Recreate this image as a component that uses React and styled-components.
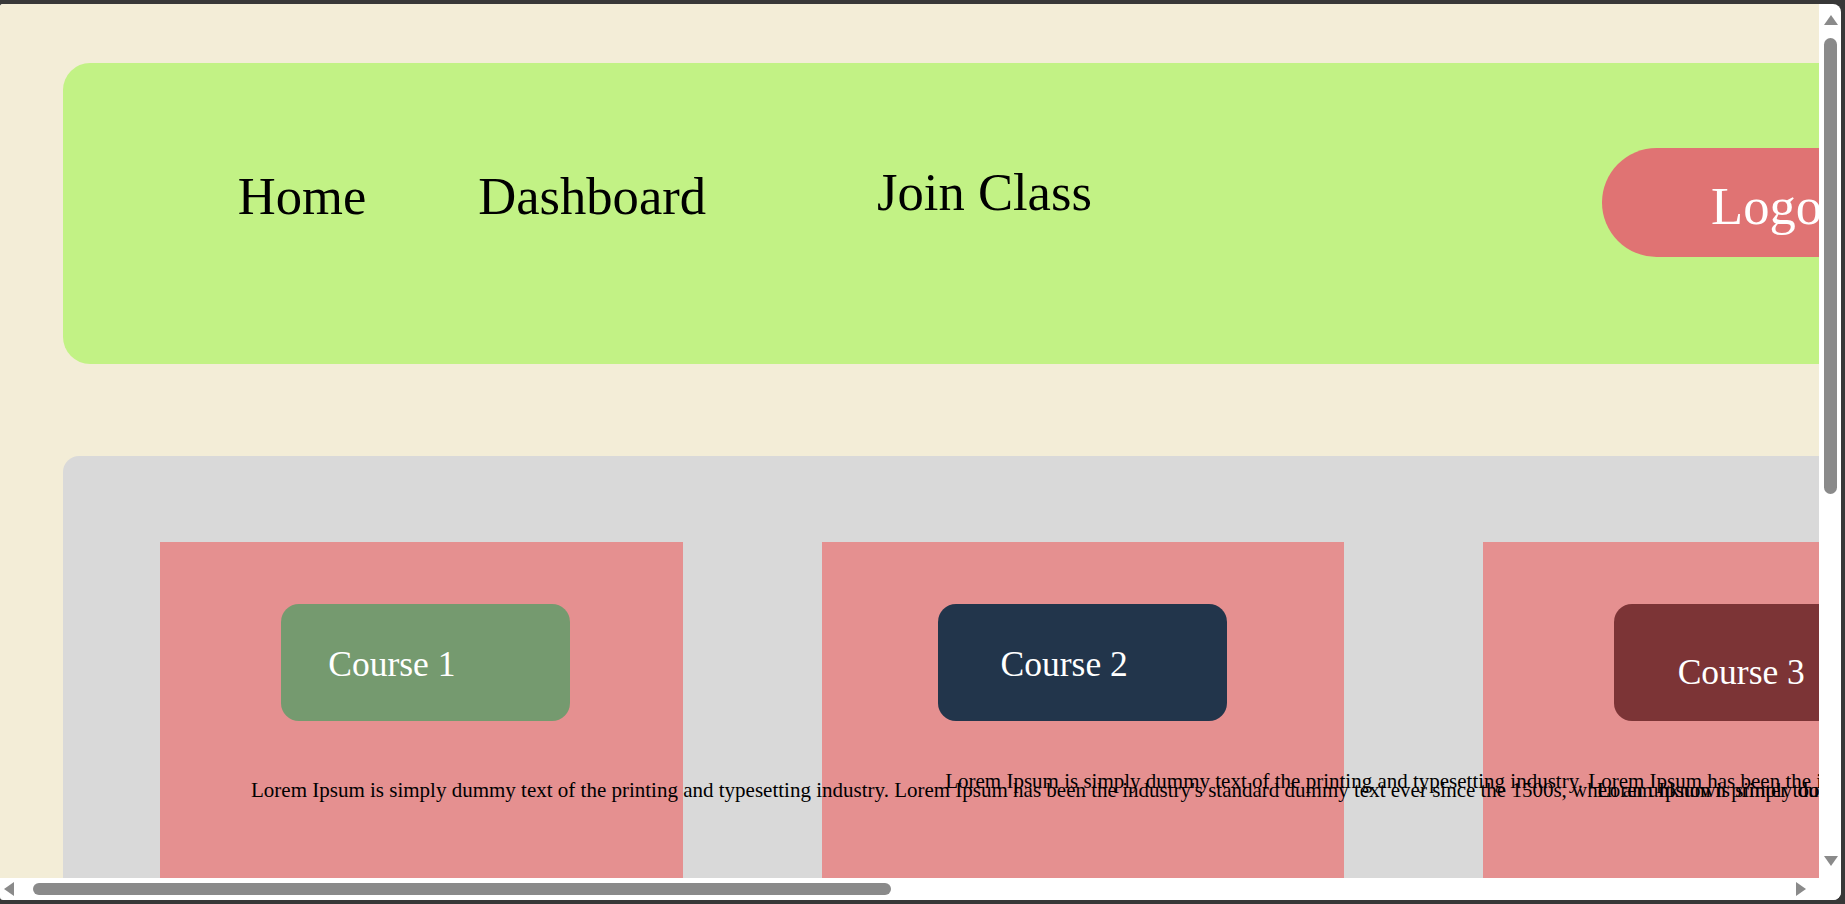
import React from 'react';
import styled, { createGlobalStyle } from 'styled-components';

const Global = createGlobalStyle`
  html, body { margin: 0; padding: 0; overflow: hidden; background: #383838; }
  body { font-family: "Liberation Serif", "Times New Roman", serif; }
`;

const Window = styled.div`
  width: 1845px;
  height: 904px;
  box-sizing: border-box;
  padding: 4px 4px 4px 0;
  background: #383838;
`;

const Frame = styled.div`
  width: 100%;
  height: 100%;
  display: grid;
  grid-template-columns: 1fr 22px;
  grid-template-rows: 1fr 22px;
  background: #ffffff;
  border-radius: 3px 8px 8px 3px;
  overflow: hidden;
`;

const Viewport = styled.div`
  overflow: hidden;
  min-width: 0;
  min-height: 0;
  background: #f3edd7;
`;

const Page = styled.div`
  width: 3757px;
  box-sizing: border-box;
  padding: 58.7px 64px 120px 63.3px;
`;

const Header = styled.header`
  display: flex;
  align-items: flex-start;
  height: 301px;
  box-sizing: border-box;
  padding-left: 174.4px;
  background: #c2f285;
  border-radius: 27px;
`;

const NavLink = styled.a`
  flex-shrink: 0;
  margin-top: ${(p) => p.$top}px;
  margin-left: ${(p) => p.$left || 0}px;
  font-size: 52.6px;
  line-height: 60px;
  color: #000;
  text-decoration: none;
  white-space: nowrap;
`;

const LogoPill = styled.div`
  flex-shrink: 0;
  margin-left: 510.5px;
  margin-top: 85px;
  height: 109px;
  box-sizing: border-box;
  padding: 28px 108px 0 108.7px;
  border-radius: 55px;
  background: #e07373;
  color: #ffffff;
  font-size: 52.6px;
  line-height: 60px;
  white-space: nowrap;
`;

const Courses = styled.section`
  margin-top: 92.8px;
  display: flex;
  align-items: flex-start;
  gap: 139.1px;
  padding: 86px 0 160px 97px;
  background: #d9d9d9;
  border-radius: 16px;
`;

const Card = styled.article`
  flex: 0 0 522.4px;
  width: 522.4px;
  min-width: 0;
  height: 880px;
  box-sizing: border-box;
  padding-top: 61.5px;
  display: flex;
  flex-direction: column;
  align-items: flex-start;
  background: #e59090;
`;

const CourseButton = styled.div`
  flex-shrink: 0;
  width: 289px;
  height: 117px;
  box-sizing: border-box;
  margin-left: ${(p) => p.$left}px;
  padding: ${(p) => p.$padTop}px 0 0 ${(p) => p.$padLeft}px;
  background: ${(p) => p.$bg};
  color: #ffffff;
  border-radius: 18px;
  font-size: 35.5px;
  line-height: 40px;
  white-space: nowrap;
`;

const Blurb = styled.p`
  position: relative;
  z-index: 1;
  margin: ${(p) => p.$top}px 0 0 ${(p) => p.$left}px;
  font-size: 21px;
  line-height: 24px;
  color: #000;
  white-space: nowrap;
`;

const VScroll = styled.div`
  display: flex;
  flex-direction: column;
  align-items: center;
  padding: 11px 0 12px;
  box-sizing: border-box;
  min-height: 0;
`;

const HScroll = styled.div`
  display: flex;
  align-items: center;
  padding: 0 13px 0 4px;
  min-width: 0;
`;

const Corner = styled.div`
  background: #ffffff;
`;

const Spacer = styled.div`
  flex: 1;
`;

const ArrowUp = styled.div`
  width: 0;
  height: 0;
  margin-left: 1px;
  border-left: 7px solid transparent;
  border-right: 7px solid transparent;
  border-bottom: 10px solid #8a8a8a;
`;

const ArrowDown = styled.div`
  width: 0;
  height: 0;
  margin-left: 1px;
  border-left: 7px solid transparent;
  border-right: 7px solid transparent;
  border-top: 10px solid #8a8a8a;
`;

const ArrowLeft = styled.div`
  width: 0;
  height: 0;
  border-top: 7px solid transparent;
  border-bottom: 7px solid transparent;
  border-right: 10px solid #8a8a8a;
`;

const ArrowRight = styled.div`
  width: 0;
  height: 0;
  border-top: 7px solid transparent;
  border-bottom: 7px solid transparent;
  border-left: 10px solid #8a8a8a;
`;

const VThumb = styled.div`
  width: 13px;
  height: 456px;
  margin-top: 12.6px;
  margin-left: 1px;
  border-radius: 7px;
  background: #8a8a8a;
`;

const HThumb = styled.div`
  width: 858px;
  height: 12.5px;
  margin-left: 19px;
  border-radius: 7px;
  background: #8a8a8a;
`;

const LOREM =
  "Lorem Ipsum is simply dummy text of the printing and typesetting industry. Lorem Ipsum has been the industry's standard dummy text ever since the 1500s, when an unknown printer took a galley of type and scrambled it to make a type specimen book. It has survived not only five centuries, but also the leap into electronic typesetting, remaining essentially unchanged.";

const courses = [
  { name: 'Course 1', bg: '#759a6f', left: 120.7, padTop: 40, padLeft: 47.3, textTop: 56.7, textLeft: 90.7 },
  { name: 'Course 2', bg: '#22354b', left: 116.2, padTop: 40, padLeft: 62.6, textTop: 47.9, textLeft: 123.4 },
  { name: 'Course 3', bg: '#7c3436', left: 131, padTop: 48.5, padLeft: 63.4, textTop: 56.7, textLeft: 113.7 },
];

export default function App() {
  return (
    <>
      <Global />
      <Window>
        <Frame>
          <Viewport>
            <Page>
              <Header>
                <NavLink $top={103.5}>Home</NavLink>
                <NavLink $top={103.5} $left={112}>Dashboard</NavLink>
                <NavLink $top={99.5} $left={171}>Join Class</NavLink>
                <LogoPill>Logo</LogoPill>
              </Header>
              <Courses>
                {courses.map((c) => (
                  <Card key={c.name}>
                    <CourseButton $bg={c.bg} $left={c.left} $padTop={c.padTop} $padLeft={c.padLeft}>
                      {c.name}
                    </CourseButton>
                    <Blurb $top={c.textTop} $left={c.textLeft}>{LOREM}</Blurb>
                  </Card>
                ))}
              </Courses>
            </Page>
          </Viewport>
          <VScroll>
            <ArrowUp />
            <VThumb />
            <Spacer />
            <ArrowDown />
          </VScroll>
          <HScroll>
            <ArrowLeft />
            <HThumb />
            <Spacer />
            <ArrowRight />
          </HScroll>
          <Corner />
        </Frame>
      </Window>
    </>
  );
}
